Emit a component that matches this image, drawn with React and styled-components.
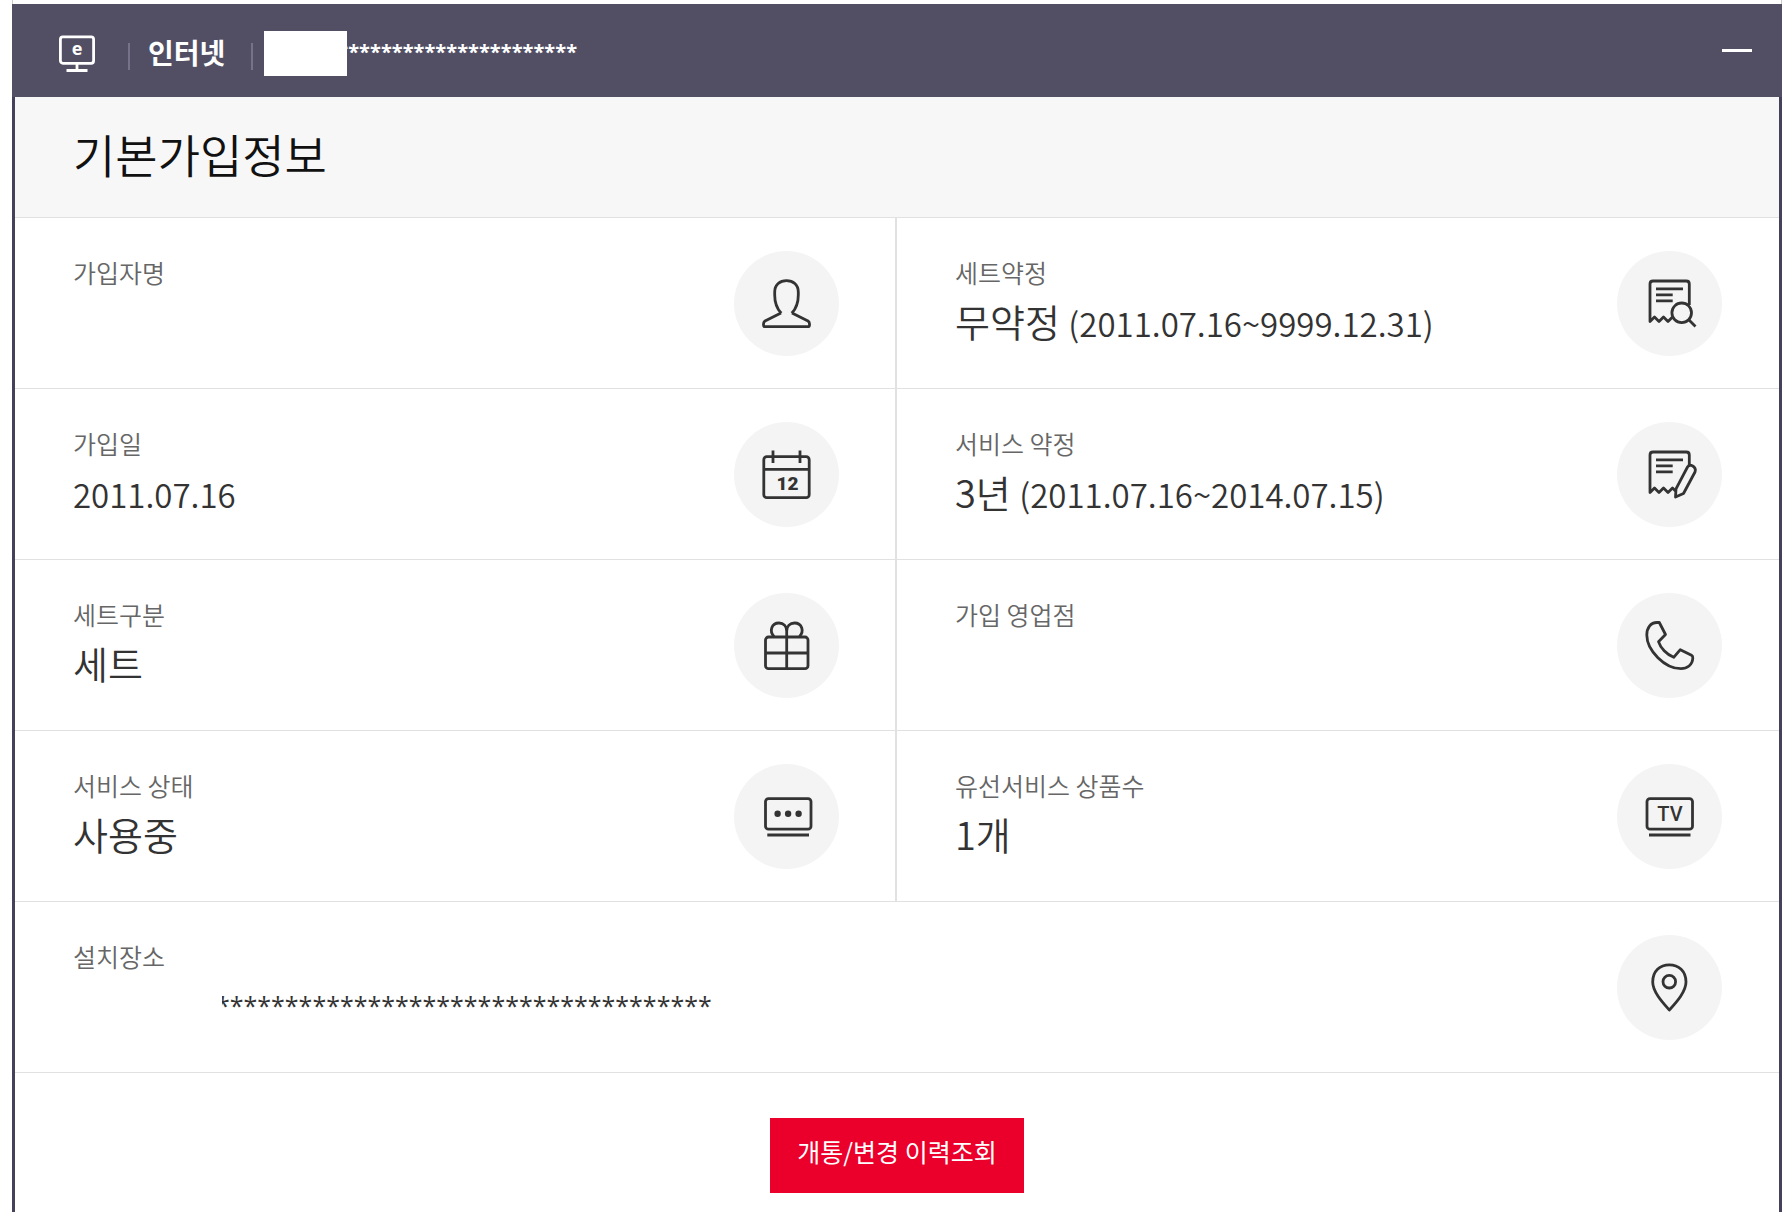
import React from 'react';
import styled, { createGlobalStyle } from 'styled-components';

const GlobalStyle = createGlobalStyle`
  * {
    box-sizing: border-box;
  }
  body {
    margin: 0;
    background: #ffffff;
    color: #333333;
    font-family: 'Noto Sans CJK KR', sans-serif;
    font-weight: 350;
  }
`;

const Page = styled.div`
  display: flex;
  flex-direction: column;
  min-height: 100vh;
  padding: 0 4px 0 12px;
`;

const PageEdge = styled.div`
  height: 4px;
  border: solid #cccccc;
  border-width: 0 1px;
`;

const Header = styled.header`
  display: flex;
  align-items: center;
  height: 93px;
  padding: 6px 30px 0 47px;
  background: #524f65;
  color: #ffffff;
`;

const ServiceName = styled.h1`
  margin: 0;
  padding-bottom: 4px;
  font-size: 28px;
  line-height: 40px;
  font-weight: 700;
`;

const Separator = styled.span`
  width: 2px;
  height: 27px;
  margin: ${({ $margin }) => $margin};
  background: #75728a;
`;

/* Covers the private part of a number or an address */
const Mask = styled.span`
  position: relative;
  z-index: 1;
  width: ${({ $width }) => $width};
  height: 45px;
  background: #ffffff;
`;

const AccountNumber = styled.span`
  margin-left: -10px;
  padding-bottom: 4px;
  font-family: 'Open Sans', sans-serif;
  font-size: 20px;
  line-height: 40px;
  font-weight: 700;
`;

const CollapseButton = styled.button`
  display: flex;
  margin: 0 0 6px auto;
  padding: 0;
  border: 0;
  background: none;
  cursor: pointer;
`;

const Panel = styled.main`
  flex: 1;
  border: solid #45415a;
  border-width: 0 3px;
`;

const SectionTitle = styled.h2`
  margin: 0;
  padding: 24px 58px 31px;
  border-bottom: 1px solid #e1e1e1;
  background: #f7f7f7;
  color: #111111;
  font-size: 46px;
  line-height: 65px;
  font-weight: 350;
`;

const InfoGrid = styled.dl`
  display: grid;
  grid-template-columns: 1fr 1fr;
  margin: 0;
`;

const InfoCell = styled.div`
  display: flex;
  justify-content: space-between;
  grid-column: ${({ $wide }) => ($wide ? '1 / -1' : 'auto')};
  height: 171px;
  padding: 33px ${({ $divided }) => ($divided ? '56px' : '57px')} 0 58px;
  border-bottom: 1px solid #e1e1e1;
  border-right: ${({ $divided }) => ($divided ? '2px solid #e1e1e1' : '0')};
`;

const InfoLabel = styled.dt`
  color: #666666;
  font-size: 25px;
  line-height: 42px;
`;

const InfoValue = styled.dd`
  margin: 0;
  font-size: 38px;
  line-height: 56px;
`;

const Figures = styled.span`
  font-size: 33px;
`;

const Address = styled.div`
  display: flex;
  align-items: center;
`;

const AddressText = styled.span`
  margin-left: -6px;
  font-family: 'Open Sans', sans-serif;
  font-size: 25px;
  font-weight: 400;
`;

const IconCircle = styled.svg`
  flex: none;
  width: 105px;
  height: 105px;
  border-radius: 50%;
  background: #f4f4f4;
  fill: none;
  stroke: #333333;
  stroke-width: 2.8;
  stroke-linecap: butt;
  stroke-linejoin: round;
`;

const IconText = styled.text`
  fill: #333333;
  stroke: none;
  font-family: Roboto, sans-serif;
  font-weight: ${({ $weight }) => $weight};
  text-anchor: middle;
`;

const IconLetter = styled.text`
  fill: #ffffff;
  stroke: none;
  font-family: 'Open Sans', sans-serif;
  font-size: 18px;
  font-weight: 700;
  text-anchor: middle;
`;

const Actions = styled.div`
  display: flex;
  justify-content: center;
  padding: 45px 0 19px;
`;

const HistoryButton = styled.button`
  padding: 15px 27px 24px;
  border: 0;
  background: #eb002b;
  color: #ffffff;
  font-family: inherit;
  font-size: 25px;
  line-height: 36px;
  font-weight: 400;
  cursor: pointer;
`;

const icons = {
  person: (
    <path d="M47 62 L31 70 Q29.5 71 29.5 73 V74 Q29.5 75.7 31 75.7 H74 Q75.5 75.7 75.5 74 V73 Q75.5 71 74 70 L58 62 M45.5 60.5 L47.5 62 M59.5 60.5 L57.5 62 M47 62 C42.5 57 40.7 50.5 40.7 44 V41 C40.7 33.5 46 29.6 52.5 29.6 C59 29.6 64.3 33.5 64.3 41 V44 C64.3 50.5 62.5 57 58 62" />
  ),
  calendar: (
    <>
      <rect x="29.8" y="34.7" width="45.4" height="41" rx="3" />
      <path d="M30 47.3 H75 M39 28.5 V41 M66 28.5 V41" />
      <IconText x="53.5" y="68" fontSize="19" $weight={900}>
        12
      </IconText>
    </>
  ),
  gift: (
    <>
      <rect x="31.5" y="44" width="42.5" height="31.7" rx="3" />
      <path d="M31.5 60 H74 M52.7 33 V75.5 M40 43.5 C35 38 37.5 30 45 30 C49.5 30 52.7 33 52.7 38 M65.5 43.5 C70.5 38 68 30 60.5 30 C56 30 52.7 33 52.7 38" />
    </>
  ),
  status: (
    <>
      <rect x="31.5" y="34.6" width="45.5" height="30.6" rx="3" />
      <path d="M33.3 71 H75" />
      <g fill="#333333" stroke="none">
        <circle cx="43.6" cy="49.8" r="3.2" />
        <circle cx="54.1" cy="49.8" r="3.2" />
        <circle cx="64.6" cy="49.8" r="3.2" />
      </g>
    </>
  ),
  docSearch: (
    <>
      <path d="M72.3 54 V33 Q72.3 30 69.3 30 H36 Q33 30 33 33 V70.5 L37.5 66 L42 70.5 L46.5 66 L51 70.5 L55.5 66 M39 37.8 H66 M39 43.8 H55.7 M39 49.9 H55.7 M71.5 68.5 L78.5 75.5" />
      <circle cx="64.7" cy="61.8" r="9.8" />
    </>
  ),
  docPen: (
    <>
      <path d="M72.3 43 V33 Q72.3 30 69.3 30 H36 Q33 30 33 33 V70.5 L37.5 66 L42 70.5 L46.5 66 L51 70.5 L55.5 66 L58.5 69 M39 37.8 H66 M39 43.8 H55.7 M39 49.9 H55.7" />
      <path d="M58.5 75 L59 66.8 L70.5 45 Q72.3 42.3 75.3 43.7 Q79.5 46 78 50 L66.5 71.5 Z" />
    </>
  ),
  phone: (
    <path d="M42.3 29.5 L48.5 41.5 L41.5 48.7 C43.5 55 49.5 61.5 56.7 64.3 L63.3 56.7 L74.5 62.3 Q76 63.2 75.8 65 C75.5 72 70 75.7 64 75.7 C48 75.7 29.8 57.5 29.8 42 C29.8 35 33.5 29.5 40 29.5 Z" />
  ),
  tv: (
    <>
      <rect x="30" y="34.6" width="45.5" height="30.6" rx="3" />
      <path d="M32 71 H73.5" />
      <IconText x="53" y="57" fontSize="20" $weight={500}>
        TV
      </IconText>
    </>
  ),
  pin: (
    <>
      <path d="M52.3 75 C46 68 35.7 57 35.7 47 C35.7 36 43 29.8 52.3 29.8 C61.6 29.8 69 36 69 47 C69 57 58.6 68 52.3 75 Z" />
      <circle cx="52.3" cy="46.7" r="6.3" />
    </>
  ),
};

const infos = [
  { label: '가입자명', icon: 'person' },
  {
    label: '세트약정',
    icon: 'docSearch',
    value: '무약정 ',
    figures: '(2011.07.16~9999.12.31)',
  },
  { label: '가입일', icon: 'calendar', figures: '2011.07.16' },
  {
    label: '서비스 약정',
    icon: 'docPen',
    value: '3년 ',
    figures: '(2011.07.16~2014.07.15)',
  },
  { label: '세트구분', icon: 'gift', value: '세트' },
  { label: '가입 영업점', icon: 'phone' },
  { label: '서비스 상태', icon: 'status', value: '사용중' },
  { label: '유선서비스 상품수', icon: 'tv', value: '1개' },
  { label: '설치장소', icon: 'pin', address: '*'.repeat(36), wide: true },
];

const InternetIcon = () => (
  <svg
    width="36"
    height="38"
    viewBox="0 0 36 38"
    fill="none"
    stroke="#ffffff"
    strokeWidth="2.8"
    aria-hidden="true"
  >
    <rect x="1.4" y="1.8" width="33.2" height="26.5" rx="2.5" />
    <path d="M18 28 V35 M7.5 35.5 H28.5" />
    <IconLetter x="18" y="20">
      e
    </IconLetter>
  </svg>
);

const Info = ({ info, divided }) => (
  <InfoCell $wide={info.wide} $divided={divided}>
    <div>
      <InfoLabel>{info.label}</InfoLabel>
      <InfoValue>
        {info.value}
        {info.figures && <Figures>{info.figures}</Figures>}
        {info.address && (
          <Address>
            <Mask $width="149px" />
            <AddressText>{info.address}</AddressText>
          </Address>
        )}
      </InfoValue>
    </div>
    <IconCircle viewBox="0 0 105 105" aria-hidden="true">
      {icons[info.icon]}
    </IconCircle>
  </InfoCell>
);

const App = () => {
  return (
    <>
      <GlobalStyle />
      <Page>
        <PageEdge />
        <Header>
          <InternetIcon />
          <Separator $margin="6px 18px 0 33px" />
          <ServiceName>인터넷</ServiceName>
          <Separator $margin="6px 11px 0 26px" />
          <Mask $width="83px" />
          <AccountNumber>{'*'.repeat(22)}</AccountNumber>
          <CollapseButton type="button" aria-label="접기">
            <svg width="30" height="30" viewBox="0 0 30 30" aria-hidden="true">
              <path d="M0 14.5 H30" stroke="#ffffff" strokeWidth="3" />
            </svg>
          </CollapseButton>
        </Header>
        <Panel>
          <SectionTitle>기본가입정보</SectionTitle>
          <InfoGrid>
            {infos.map((info, index) => (
              <Info key={info.label} info={info} divided={index % 2 === 0 && !info.wide} />
            ))}
          </InfoGrid>
          <Actions>
            <HistoryButton type="button">개통/변경 이력조회</HistoryButton>
          </Actions>
        </Panel>
      </Page>
    </>
  );
};

export default App;
